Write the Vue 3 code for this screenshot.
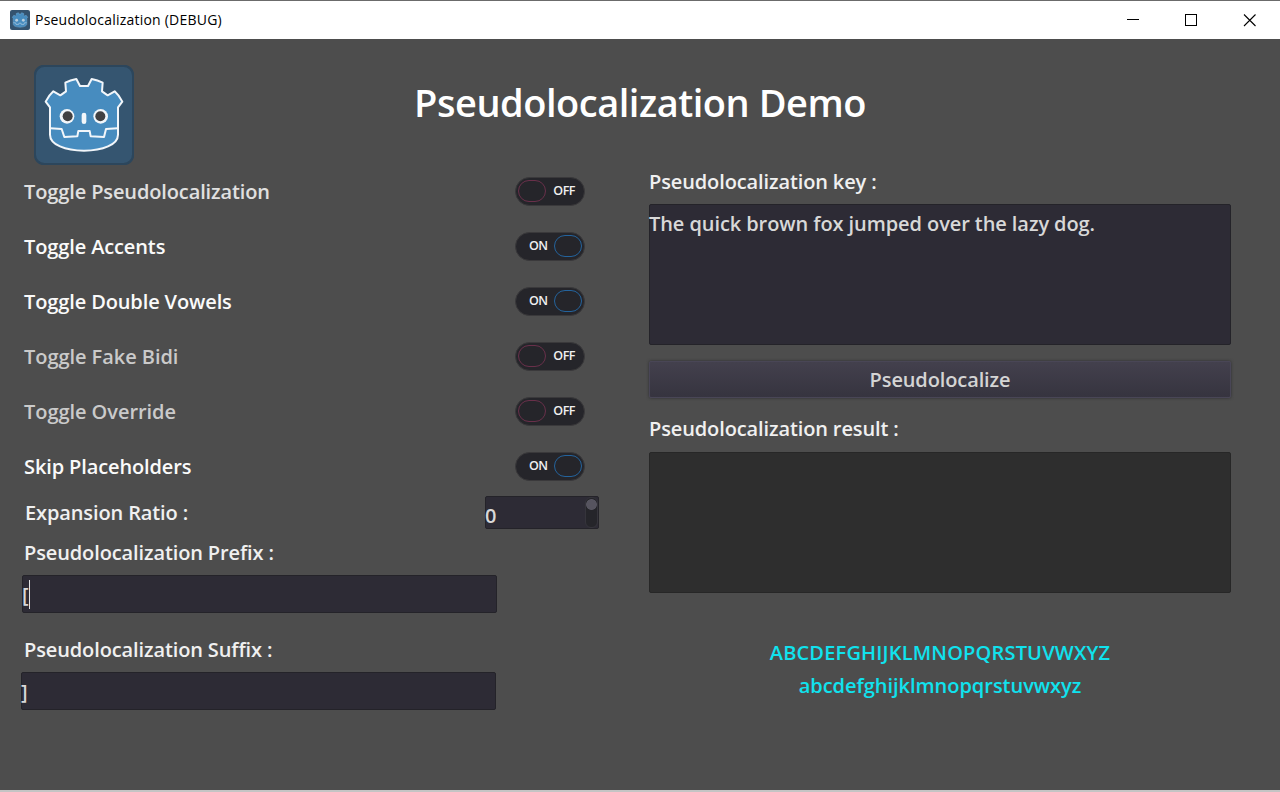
<script setup>
import { ref } from 'vue'

const toggles = ref([
  { label: 'Toggle Pseudolocalization', on: false, tone: 'soft' },
  { label: 'Toggle Accents', on: true, tone: 'bright' },
  { label: 'Toggle Double Vowels', on: true, tone: 'bright' },
  { label: 'Toggle Fake Bidi', on: false, tone: 'dim' },
  { label: 'Toggle Override', on: false, tone: 'dim' },
  { label: 'Skip Placeholders', on: true, tone: 'bright' },
])
const source = ref('The quick brown fox jumped over the lazy dog.')
const prefix = ref('[')
const suffix = ref(']')
const ratio = ref('0')
</script>

<template>
  <div class="window">
    <header class="titlebar">
      <svg class="app-icon" viewBox="30 27 300 300">
        <rect x="30" y="27" width="300" height="300" rx="30" fill="#34536f" />
        <path d="M65 137 88 105 109 116 125 104 124 80 156 68 166 88 194 88 204 68 236 80 235 104 251 116 272 105 295 137 282 154V235C282 268 236 284 180 284S78 268 78 235V154Z" fill="#478cbf" stroke="#6ea6cf" stroke-width="8" />
        <circle cx="130" cy="181" r="21" fill="#b9cddc" /><circle cx="230" cy="181" r="21" fill="#b9cddc" />
        <path d="M80 218 114 220 120 243H160L164 225H196L200 243H240L246 220 280 218" fill="none" stroke="#9fc3dd" stroke-width="12" />
      </svg>
      <span class="caption">Pseudolocalization (DEBUG)</span>
      <svg class="controls" width="130" height="14" viewBox="0 0 130 14" fill="none" stroke="#000" shape-rendering="crispEdges">
        <path d="M0 6.5H12" />
        <rect x="58.500" y="1.500" width="11" height="11" />
        <path d="M117 1.500 128.500 13M128.500 1.500 117 13" shape-rendering="auto" stroke-width="1.100" />
      </svg>
    </header>

    <main class="stage">
      <section class="hero">
        <svg class="logo" viewBox="30 27 300 300">
          <rect x="32.500" y="29.500" width="295" height="295" rx="29" fill="#355570" stroke="#2c465c" stroke-width="7" />
          <path d="M65 137C71 125 79 114 88 106L109 118 126 106 124 80Q139 72 157 69L168 90H192L203 69Q221 72 236 80L234 106 251 118 272 106C281 114 289 125 295 137L282 154V236C282 266 236 284 180 284S78 266 78 236V154Z" fill="#478cbf" stroke="#f2f6fa" stroke-width="6" stroke-linejoin="round" />
          <path d="M79 217 113 219 121 243 160 241 163 225H197L200 241 240 243 246 219 281 217" fill="none" stroke="#f2f6fa" stroke-width="6" stroke-linejoin="round" />
          <circle cx="129" cy="181" r="22" fill="#f2f6fa" /><circle cx="230" cy="181" r="22" fill="#f2f6fa" />
          <circle cx="131" cy="181" r="15" fill="#414042" /><circle cx="229" cy="181" r="15" fill="#414042" />
          <rect x="173" y="170" width="14" height="34" rx="7" fill="#f2f6fa" />
        </svg>
        <h1>Pseudolocalization Demo</h1>
      </section>

      <div class="columns">
        <section class="options">
          <div v-for="t in toggles" :key="t.label" class="row">
            <span :class="['text', t.tone]">{{ t.label }}</span>
            <button :class="['switch', { on: t.on }]" @click="t.on = !t.on">
              <i class="knob"></i><b>{{ t.on ? 'ON' : 'OFF' }}</b>
            </button>
          </div>
          <div class="ratio">
            <span class="text">Expansion Ratio :</span>
            <div class="field spin"><span class="text">{{ ratio }}</span><i class="bar"></i></div>
          </div>
          <div class="text label prefix-label">Pseudolocalization Prefix :</div>
          <div class="field line prefix"><span class="text">{{ prefix }}</span><i class="caret"></i></div>
          <div class="text label suffix-label">Pseudolocalization Suffix :</div>
          <div class="field line suffix"><span class="text">{{ suffix }}</span></div>
        </section>

        <section class="output">
          <div class="text">Pseudolocalization key :</div>
          <div class="field area"><span class="text">{{ source }}</span></div>
          <button class="text action">Pseudolocalize</button>
          <div class="text">Pseudolocalization result :</div>
          <div class="field area result"></div>
          <div class="text alphabet">
            <div class="upper">ABCDEFGHIJKLMNOPQRSTUVWXYZ</div>
            <div class="lower">abcdefghijklmnopqrstuvwxyz</div>
          </div>
        </section>
      </div>
    </main>
  </div>
</template>

<style>
body { margin: 0; overflow: hidden; }
</style>

<style scoped>
* { box-sizing: border-box; }
.window { width: 1280px; height: 792px; background: #4d4d4d; border-bottom: 2px solid #c4c4c4; font-family: "Open Sans", "Noto Sans", sans-serif; overflow: hidden; }
.titlebar { height: 39px; background: #fff; border-top: 1px solid #6b6b6b; display: flex; align-items: center; padding: 0 18px 0 10px; }
.app-icon { width: 20px; height: 20px; margin: -1px 5px 0 0; }
.caption { font-size: 14px; line-height: 20px; letter-spacing: 0.220px; color: #000; white-space: nowrap; }
.controls { margin-left: auto; margin-right: 5px; }
.stage { height: 751px; }
.hero { height: 125px; padding: 26px 0 0 34px; display: grid; grid-template-columns: 100px 1012px; }
.logo { width: 100px; height: 100px; }
h1 { margin: 10px 0 0; font-size: 38px; line-height: 54px; letter-spacing: -0.480px; font-weight: 600; color: #fff; text-align: center; white-space: nowrap; }
.columns { display: flex; padding-left: 21px; }
.options { width: 628px; }
.output { width: 582px; padding-top: 4px; }
.text { font-size: 20px; font-weight: 600; line-height: 28px; letter-spacing: -0.120px; color: #f0f0f0; white-space: nowrap; }
.row { height: 55px; width: 564px; padding-left: 3px; display: flex; align-items: center; justify-content: space-between; }
.soft { color: #e0e0e0; }
.bright { color: #fafafa; }
.dim { color: #cacaca; letter-spacing: -0.050px; }
.switch { width: 70px; height: 29px; border: 1px solid #3a393b; border-radius: 15px; background: #25252a; display: flex; align-items: center; padding: 0 9px 0 2px; justify-content: space-between; font-family: inherit; margin-top: -1px; }
.knob { width: 28px; height: 22px; border: 1.500px solid #69304a; border-radius: 11px; }
.switch b { font-size: 12.500px; line-height: 16px; letter-spacing: -0.500px; font-weight: 600; color: #f0f0f0; }
.switch.on { flex-direction: row-reverse; padding: 0 2px 0 13px; }
.on .knob { border-color: #24639c; }
.field { background: #2d2b35; border: 1px solid #242329; border-radius: 2px; }
.field .text { color: #d8d8d8; margin-left: -1px; }
.ratio { height: 46px; width: 578px; padding: 2px 0 0 4px; display: flex; justify-content: space-between; align-items: flex-start; }
.ratio > .text { margin-top: 3px; }
.spin { width: 114px; height: 33px; display: flex; justify-content: space-between; }
.spin .text { margin-top: 5px; }
.bar { width: 13px; height: 31px; background: radial-gradient(circle at 5.500px 6.500px, #56545f 5px, #25252a 5.800px); border: 1px solid #35343b; border-radius: 6px; }
.label { margin-left: 3px; }
.prefix-label { margin-top: -1px; }
.line { width: 475px; height: 38px; display: flex; }
.line .text { margin-top: 5px; }
.prefix { margin: 8px 0 0 1px; }
.caret { width: 1px; height: 29px; margin: 4px 0 0 1px; background: #e4e4e4; }
.suffix-label { margin-top: 23px; }
.suffix { margin-top: 8px; }
.area { height: 141px; margin-top: 8px; padding-top: 5px; }
.area .text { display: block; letter-spacing: -0.080px; }
.action { display: block; width: 582px; height: 37px; margin: 16px 0 17px; padding: 0; font-family: inherit; color: #d4d4d4; background: linear-gradient(#43404d, #36343f); border: 1px solid #494656; border-radius: 2px; box-shadow: 0 0 3px #2c2c30; }
.result { margin-top: 9px; background: #2e2e2e; border-color: #272727; }
.alphabet { margin-top: 43px; text-align: center; line-height: 33px; color: #10e2ee; }
.upper { letter-spacing: 0.180px; }
.lower { letter-spacing: -0.030px; }
</style>
